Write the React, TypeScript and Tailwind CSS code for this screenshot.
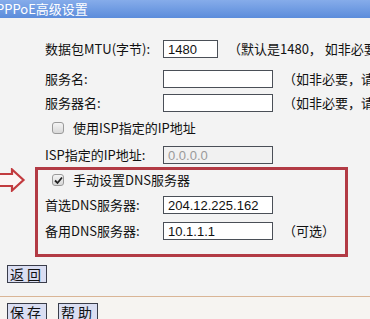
import type { ReactNode } from "react";

const cjk = "font-['SimSun','Noto_Sans_CJK_SC',sans-serif]";

function Input({ value, className = "", disabled }: { value?: string; className?: string; disabled?: boolean }) {
  return (
    <div
      className={`shrink-0 h-[18px] border border-[#4a4f57] flex items-center px-[4px] text-[13px] font-['Liberation_Sans',sans-serif] leading-none ${
        disabled ? "bg-[#f1f1f1] text-[#9a9a9a]" : "bg-white text-[#111]"
      } ${className}`}
    >
      {value}
    </div>
  );
}

function Checkbox({ checked }: { checked?: boolean }) {
  return (
    <span className="w-[12px] h-[12px] rounded-[3px] border border-[#9a9a9a] bg-gradient-to-b from-[#f4f4f4] to-[#d8d8d8] flex items-center justify-center">
      {checked && (
        <svg width="9" height="9" viewBox="0 0 9 9">
          <path d="M1 4.5 L3.5 7 L8 1.5" stroke="#222" strokeWidth="1.8" fill="none" />
        </svg>
      )}
    </span>
  );
}

function Row({ label, children, className = "" }: { label: string; children?: ReactNode; className?: string }) {
  return (
    <div className={`flex items-center ${className}`}>
      <span className="w-[118px] shrink-0">{label}</span>
      {children}
    </div>
  );
}

function Button({ children }: { children: ReactNode }) {
  return (
    <div className="h-[18px] w-[40px] border border-[#3a3d4a] bg-[#dadef2] flex items-center justify-center text-[14px] tracking-[3px] text-[#111] leading-none">
      {children}
    </div>
  );
}

export default function App() {
  return (
    <div className={`w-[370px] h-[319px] overflow-hidden bg-[#f3f3f3] text-[13px] text-[#111] ${cjk}`}>
      <div className="h-[18px] bg-gradient-to-b from-[#86acea] to-[#5b8cdb] flex items-center text-white text-[13px] -ml-[4px] pl-0 whitespace-nowrap">
        PPPoE高级设置
      </div>

      <div className="pl-[45px] pt-[19px]">
        <Row label="数据包MTU(字节):" className="h-[24px]">
          <Input value="1480" className="w-[55px]" />
          <span className="ml-[10px] whitespace-nowrap">（默认是1480， 如非必要，请勿修改）</span>
        </Row>
        <Row label="服务名:" className="h-[24px] mt-[6px]">
          <Input className="w-[110px]" />
          <span className="ml-[10px] whitespace-nowrap">（如非必要，请勿填写）</span>
        </Row>
        <Row label="服务器名:" className="h-[24px]">
          <Input className="w-[110px]" />
          <span className="ml-[10px] whitespace-nowrap">（如非必要，请勿填写）</span>
        </Row>
        <div className="h-[24px] mt-[1px] flex items-center pl-[7px] gap-[9px]">
          <Checkbox />
          <span>使用ISP指定的IP地址</span>
        </div>
        <Row label="ISP指定的IP地址:" className="h-[24px] mt-[3px]">
          <Input value="0.0.0.0" disabled className="w-[110px]" />
        </Row>
      </div>

      <div className="flex items-start">
        <div className="w-[35px] shrink-0 pt-[1px]">
          <svg width="26" height="24" viewBox="0 0 26 24">
            <path
              d="M-2 6 L12 6 L12 1.5 L23.5 12 L12 22.5 L12 18 L-2 18 Z"
              fill="#fbf4f4"
              stroke="#c23a3e"
              strokeWidth="2.2"
              strokeLinejoin="miter"
            />
          </svg>
        </div>
        <div className="w-[313px] border-[3px] border-[#b23a44] pl-[7px] pb-[12px]">
          <div className="h-[20px] flex items-center pl-[7px] gap-[9px]">
            <Checkbox checked />
            <span>手动设置DNS服务器</span>
          </div>
          <Row label="首选DNS服务器:" className="h-[22px] mt-[4px]">
            <Input value="204.12.225.162" className="w-[110px]" />
          </Row>
          <Row label="备用DNS服务器:" className="h-[22px] mt-[4px]">
            <Input value="10.1.1.1" className="w-[110px]" />
            <span className="ml-[10px] whitespace-nowrap">（可选）</span>
          </Row>
        </div>
      </div>

      <div className="pl-[7px] mt-[8px]">
        <Button>返回</Button>
      </div>
      <div className="mt-[13px] h-px bg-[#d9b596]" />
      <div className="bg-[#f6f4f1] pt-[6px] pl-[7px] flex gap-[11px] h-[40px]">
        <Button>保存</Button>
        <Button>帮助</Button>
      </div>
    </div>
  );
}
